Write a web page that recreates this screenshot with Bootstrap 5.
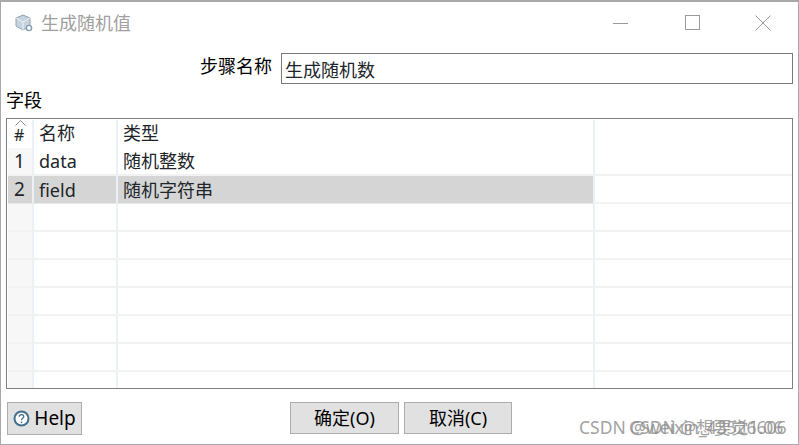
<!DOCTYPE html>
<html lang="zh-CN">
<head>
  <meta charset="UTF-8">
  <meta name="viewport" content="width=device-width, initial-scale=1.0">
  <title>生成随机值</title>
  <link href="https://cdn.jsdelivr.net/npm/bootstrap@5.3.0/dist/css/bootstrap.min.css" rel="stylesheet">
  <style>
    html, body { height: 100%; overflow: hidden; }
    body {
      background: #fff;
      color: #000;
      font-family: "Noto Sans", "Noto Sans CJK SC", sans-serif;
      font-size: 18px;
    }
    .dlg-window {
      position: relative;
      height: 445px;
      border: 1px solid #a9a9a9;
      border-width: 2px 1px 1px 1px;
      padding: 0 5px 0 5px;
    }
    .dlg-title {
      height: 41px;
      margin: 0 -5px 0 -5px;
      padding-left: 13px;
    }
    .dlg-title-text { color: #a0a0a0; font-size: 18px; line-height: 1; margin-left: 7px; }
    .dlg-ctl { width: 71px; height: 41px; }
    .dlg-ctl-max { margin-left: 1px; margin-right: -1px; }
    .step-row { height: 31px; margin-top: 10px; }
    .step-label { font-size: 18px; line-height: 1; padding-bottom: 5px; margin-right: 9px; }
    .step-input {
      width: 512px;
      height: 31px;
      border: 1px solid #7a7a7a;
      border-radius: 0;
      padding: 1px 3px;
      font-size: 18px;
      box-shadow: none;
    }
    .fields-label { font-size: 18px; line-height: 1; margin-top: 5px; height: 29px; padding-top: 2px; }
    .grid-wrap {
      height: 271px;
      border: 1px solid #7f7f7f;
      padding: 1px 0 0 1px;
      overflow: hidden;
    }
    .field-grid { table-layout: fixed; width: 786px; border-collapse: separate; border-spacing: 0; margin: 0; }
    .field-grid td, .field-grid th {
      height: 28px;
      padding: 0 0 0 5px;
      font-weight: 400;
      font-size: 18px;
      line-height: 1;
      background: #fff;
      border-bottom: 2px solid #f2f2f2;
      border-right: 2px solid #ecf1f9;
      vertical-align: middle;
      white-space: nowrap;
      box-shadow: none;
    }
    .field-grid th { border-bottom: 0; padding-bottom: 3px; }
    .field-grid .num-col { background: #f7f7f7; padding-left: 6px; font-size: 19px; }
    .field-grid th.num-col { background: #fff; position: relative; padding: 1px 0 0 6px; font-size: 16px; }
    .field-grid .last-col { border-right: 0; }
    .field-grid tr.picked td { background: #d5d5d5; border-bottom: 1px solid #e9e9e9; border-right-color: #eceff5; }
    .field-grid tr.picked td.last-col { background: #fff; border-bottom: 2px solid #f2f2f2; }
    .sort-caret { position: absolute; left: 7px; top: 0; }
    .bottom-row { position: relative; height: 41px; margin-top: 13px; }
    .dlg-btn {
      background: #e1e1e1;
      border: 1px solid #adadad;
      border-radius: 0;
      color: #000;
      font-size: 18px;
      line-height: 1;
      padding: 0;
      height: 32px;
      width: 109px;
    }
    .dlg-btn-cancel { width: 108px; }
    .help-btn { width: 75px; height: 33px; margin-top: 3px; margin-left: 1px; font-size: 19px; }
    .action-btns { position: absolute; left: 284px; top: 0; gap: 5px; }
    .wm-text {
      position: absolute;
      top: 415px;
      color: #8c8c8c;
      opacity: .8;
      font-size: 17.5px;
      line-height: 1.2;
      white-space: nowrap;
    }
    .wm-one { left: 578px; }
    .wm-two { left: 628px; }
  </style>
</head>
<body>
  <div class="dlg-window">
    <div class="dlg-title d-flex align-items-center">
      <svg width="20" height="20" viewBox="0 0 20 20">
        <path d="M9 2l7 3v8l-7 4-7-4V5z" fill="#c4d3de" stroke="#8ca3b4"/>
        <path d="M2 5l7 4 7-4M9 9v8" fill="none" stroke="#eef2f5"/>
        <circle cx="15" cy="15" r="2.6" fill="#fff" stroke="#7f9db3" stroke-width="1.4"/>
      </svg>
      <span class="dlg-title-text">生成随机值</span>
      <div class="ms-auto d-flex">
        <div class="dlg-ctl d-flex align-items-center justify-content-center">
          <svg width="16" height="16" viewBox="0 0 16 16"><path d="M0 8.500h15" stroke="#9a9a9a"/></svg>
        </div>
        <div class="dlg-ctl dlg-ctl-max d-flex align-items-center justify-content-center">
          <svg width="16" height="16" viewBox="0 0 16 16"><rect x=".5" y=".5" width="14" height="14" fill="none" stroke="#9a9a9a"/></svg>
        </div>
        <div class="dlg-ctl d-flex align-items-center justify-content-center">
          <svg width="16" height="16" viewBox="0 0 16 16"><path d="M.5.5l15 15M15.500.5l-15 15" stroke="#9a9a9a"/></svg>
        </div>
      </div>
    </div>

    <div class="step-row d-flex justify-content-end align-items-center">
      <label class="step-label" for="stepName">步骤名称</label>
      <input id="stepName" class="form-control step-input" value="生成随机数">
    </div>

    <div class="fields-label">字段</div>

    <div class="grid-wrap">
      <table class="table field-grid">
        <colgroup>
          <col style="width:26px"><col style="width:84px"><col style="width:477px"><col>
        </colgroup>
        <thead>
          <tr>
            <th class="num-col">
              <svg class="sort-caret" width="11" height="6" viewBox="0 0 11 6"><path d="M.5 5.500l5-5 5 5" fill="none" stroke="#8a8a8a"/></svg>
              #
            </th>
            <th>名称</th>
            <th>类型</th>
            <th class="last-col"></th>
          </tr>
        </thead>
        <tbody>
          <tr><td class="num-col">1</td><td>data</td><td>随机整数</td><td class="last-col"></td></tr>
          <tr class="picked"><td class="num-col">2</td><td>field</td><td>随机字符串</td><td class="last-col"></td></tr>
          <tr><td class="num-col"></td><td></td><td></td><td class="last-col"></td></tr>
          <tr><td class="num-col"></td><td></td><td></td><td class="last-col"></td></tr>
          <tr><td class="num-col"></td><td></td><td></td><td class="last-col"></td></tr>
          <tr><td class="num-col"></td><td></td><td></td><td class="last-col"></td></tr>
          <tr><td class="num-col"></td><td></td><td></td><td class="last-col"></td></tr>
          <tr><td class="num-col"></td><td></td><td></td><td class="last-col"></td></tr>
          <tr><td class="num-col"></td><td></td><td></td><td class="last-col"></td></tr>
        </tbody>
      </table>
    </div>

    <div class="bottom-row">
      <button type="button" class="btn dlg-btn help-btn d-flex align-items-center justify-content-center">
        <svg width="17" height="17" viewBox="0 0 17 17" class="me-1">
          <circle cx="8.500" cy="8.500" r="7" fill="#fff" stroke="#44708f" stroke-width="2"/>
          <path d="M6.300 6.800c0-3 4.500-3 4.500-.2 0 1.700-2.300 1.700-2.300 3.600" fill="none" stroke="#44708f" stroke-width="1.300"/>
          <circle cx="8.500" cy="12.300" r=".9" fill="#44708f"/>
        </svg>
        Help
      </button>
      <div class="action-btns d-flex">
        <button type="button" class="btn dlg-btn">确定(O)</button>
        <button type="button" class="btn dlg-btn dlg-btn-cancel">取消(C)</button>
      </div>
    </div>

    <span class="wm-text wm-one">CSDN @weixin_43526606</span>
    <span class="wm-text wm-two">CSDN @想要觉1.06</span>
  </div>
  <script src="https://cdn.jsdelivr.net/npm/bootstrap@5.3.0/dist/js/bootstrap.bundle.min.js"></script>
</body>
</html>
